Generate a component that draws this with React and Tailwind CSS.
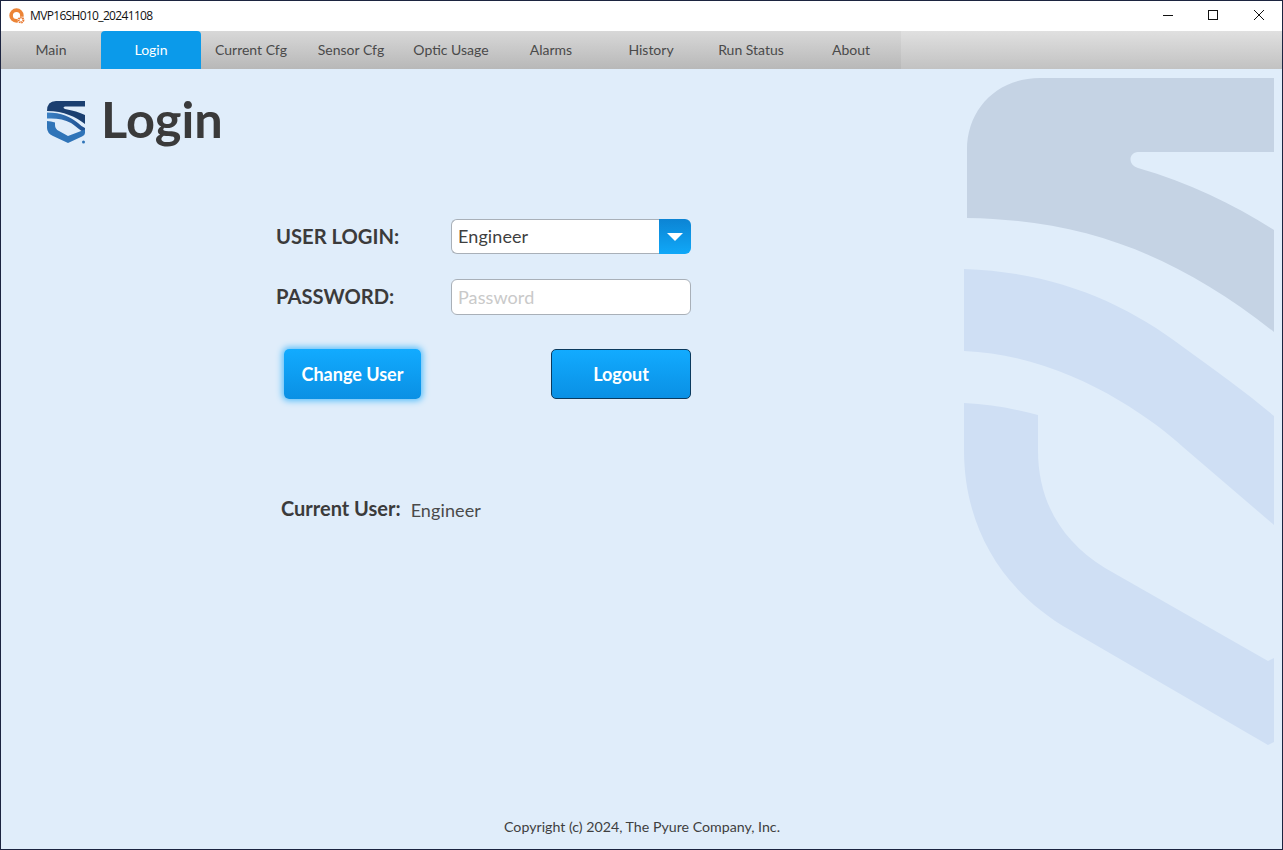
const TABS = ["Main", "Login", "Current Cfg", "Sensor Cfg", "Optic Usage", "Alarms", "History", "Run Status", "About"];

const AppIcon = () => (
  <svg width="16" height="16" viewBox="0 0 16 16">
    <circle cx="7.5" cy="7.5" r="5.4" fill="none" stroke="#ec8436" strokeWidth="3.6" />
    <circle cx="12" cy="12" r="3.4" fill="#ffffff" />
    <circle cx="12" cy="12" r="2.4" fill="none" stroke="#e8772e" strokeWidth="2" strokeDasharray="1.3 0.6" />
  </svg>
);

const ShieldLogo = () => (
  <svg className="mt-[6px]" width="41" height="46" viewBox="0 0 41 46">
    <defs>
      <linearGradient id="band" x1="0" y1="0" x2="1" y2="0">
        <stop offset="0" stopColor="#3a80c4" />
        <stop offset="1" stopColor="#1f4f8f" />
      </linearGradient>
    </defs>
    <path d="M1 11 Q1 1 10 1 H39 V6.5 H19 Q16 7.5 19 9 Q31 11 39 15 V24 C30 17 18 11 1 11 Z" fill="#1b3f70" />
    <path d="M1 12.5 C16 12.5 24 17 32 23 Q36 27 39 28 V33 C33 30 30 26 25 23 C18 19 10 18 1 18.5 Z" fill="url(#band)" />
    <path d="M1 21 Q5 21 9 22.5 V25 Q9 29 13 31 L22 36 L39 29.5 V33 Q39 35 36 36.5 L22 43 L7 36 Q1 33 1 28 Z" fill="#2f74b8" />
    <circle cx="37.5" cy="42" r="1.5" fill="#2f74b8" />
  </svg>
);

const Watermark = () => (
  <svg className="absolute -left-px -top-px pointer-events-none" width="1283" height="850" viewBox="0 0 1283 850">
    <path d="M967 218 V150 C967 108 998 78 1040 78 H1274 V152 H1138 C1128 153 1128 165 1138 168 C1190 183 1235 205 1274 230 V332 C1180 258 1090 220 967 218 Z" fill="#c5d3e4" />
    <path d="M964 269 C1055 272 1125 303 1183 347 C1215 370 1248 394 1274 416 V525 L1183 447 C1150 417 1065 355 964 351 Z" fill="#cfdff4" />
    <path d="M964 403 C990 404 1015 409 1038 415 V450 C1038 500 1060 540 1105 568 L1268 661 L1274 658 V742 L1268 745 L1070 630 C1000 590 964 525 964 450 Z" fill="#cfdff4" />
  </svg>
);

const WindowButtons = () => (
  <div className="flex items-center h-full">
    <svg width="46" height="30" viewBox="0 0 46 30"><path d="M19 14.5 H29" stroke="#111" strokeWidth="1" /></svg>
    <svg width="46" height="30" viewBox="0 0 46 30"><rect x="18.5" y="9.5" width="9" height="9" fill="none" stroke="#111" strokeWidth="1" /></svg>
    <svg width="46" height="30" viewBox="0 0 46 30"><path d="M18 9 L28 19 M28 9 L18 19" stroke="#111" strokeWidth="1" /></svg>
  </div>
);

export default function App() {
  return (
    <div className="relative w-[1283px] h-[850px] flex flex-col border border-[#1c2440] bg-[#e0edfa] overflow-hidden font-['Lato',sans-serif] text-[#3b3b3b]">
      <Watermark />

      <div className="relative h-[30px] shrink-0 bg-white flex items-center justify-between pl-[8px]">
        <div className="flex items-center gap-[5px]">
          <AppIcon />
          <span className="font-['Open_Sans',sans-serif] text-[12px] text-[#111] tracking-[-0.66px]">MVP16SH010_20241108</span>
        </div>
        <WindowButtons />
      </div>

      <div className="relative h-[38px] shrink-0 bg-gradient-to-b from-[#e0e0e0] to-[#c2c2c2] flex">
        <div className="flex bg-gradient-to-b from-[#d8d8d8] to-[#b8b8b8]">
          {TABS.map((t) => (
            <div
              key={t}
              className={
                t === "Login"
                  ? "w-[100px] flex items-center justify-center pb-[2px] text-[14px] rounded-t-[4px] bg-[#0b9aea] text-white"
                  : "w-[100px] flex items-center justify-center pb-[2px] text-[14px] text-[#4a4a4a]"
              }
            >
              {t}
            </div>
          ))}
        </div>
      </div>

      <div className="relative flex-1 flex flex-col pl-[45px]">
        <div className="flex items-center gap-[14px] pt-[22px] h-[80px]">
          <ShieldLogo />
          <h1 className="pb-[2px] text-[50.5px] leading-none font-bold text-[#3a3a3a]">Login</h1>
        </div>

        <div className="ml-[230px] mt-[70px] w-[415px]">
          <div className="flex items-center h-[35px]">
            <label className="w-[175px] text-[20.2px] font-bold">USER LOGIN:</label>
            <div className="w-[240px] h-[35px] flex">
              <span className="flex-1 pl-[6px] rounded-l-[6px] border border-r-0 border-[#a9b0b8] bg-white text-[18px] tracking-[0.1px] leading-[33px] text-[#3f3f3f]">Engineer</span>
              <div className="w-[32px] rounded-r-[6px] bg-gradient-to-b from-[#0c84d4] to-[#10a8f8] flex items-center justify-center">
                <div className="w-0 h-0 border-l-[8px] border-r-[8px] border-t-[8px] border-l-transparent border-r-transparent border-t-white" />
              </div>
            </div>
          </div>

          <div className="flex items-center h-[36px] mt-[25px]">
            <label className="w-[175px] pb-[2px] text-[20.2px] font-bold">PASSWORD:</label>
            <div className="w-[240px] h-[36px] rounded-[6px] border border-[#a9b0b8] bg-white pl-[6px] text-[18px] tracking-[0.1px] leading-[34px] text-[#c9c9c9]">Password</div>
          </div>

          <div className="flex justify-between items-center mt-[34px] pl-[8px]">
            <button className="w-[137px] h-[50px] rounded-[5px] bg-gradient-to-b from-[#12abff] to-[#0a90e4] text-white text-[18px] font-bold shadow-[0_0_6px_2px_#5cc0fa]">Change User</button>
            <button className="w-[140px] h-[50px] rounded-[5px] border border-[#0b3a5e] bg-gradient-to-b from-[#12abff] to-[#0a90e4] text-white text-[18px] font-bold">Logout</button>
          </div>

          <div className="flex items-baseline mt-[94px] pl-[5px]">
            <span className="text-[20px] font-bold">Current User:</span>
            <span className="ml-[10px] text-[18px] tracking-[0.1px] relative top-[1px] text-[#4a4a4a]">Engineer</span>
          </div>
        </div>

        <p className="mt-auto mb-[12px] ml-[457px] w-[368px] text-center text-[14.2px] text-[#3f3f3f] -translate-x-[45px]">Copyright (c) 2024, The Pyure Company, Inc.</p>
      </div>
    </div>
  );
}
